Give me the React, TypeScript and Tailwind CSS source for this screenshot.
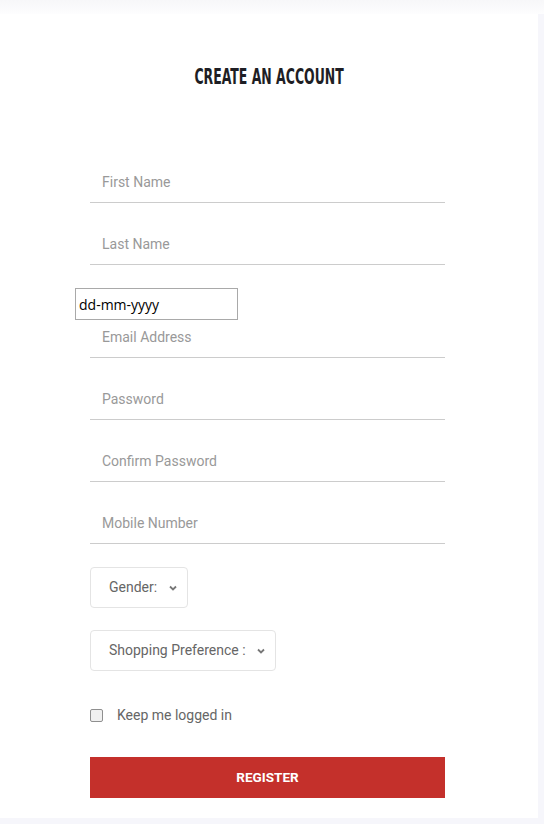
import React from 'react';

const Field: React.FC<{ label: string; className?: string }> = ({ label, className = 'mt-[22px]' }) => (
  <div className={`${className} h-10 border-b border-[#cccccc] flex items-center px-3`}>
    <span className="text-[14px] text-[#999999]">{label}</span>
  </div>
);

const Chevron: React.FC = () => (
  <svg width="8" height="6" viewBox="0 0 8 6" className="text-[#777777]">
    <path d="M1 1.5 L4 4.5 L7 1.5" fill="none" stroke="currentColor" strokeWidth="1.8" />
  </svg>
);

const SelectBox: React.FC<{ label: string; width: string; className: string }> = ({ label, width, className }) => (
  <div
    className={`${className} ${width} h-[41px] border border-[#e4e4e4] rounded-[4px] flex items-center justify-between pl-[18px] pr-[10px]`}
  >
    <span className="text-[14px] text-[#666666]">{label}</span>
    <Chevron />
  </div>
);

export default function App() {
  return (
    <div className="w-[544px] h-[824px] bg-[#f6f6fb] overflow-hidden" style={{ fontFamily: 'Roboto, sans-serif' }}>
      <div className="h-[14px] bg-gradient-to-b from-[#f7f7f9] to-[#fdfdfe]" />
      <div className="w-[538px] h-[804px] bg-white">
        <h1
          className="pt-[48px] text-center text-[21px] leading-[31px] font-bold text-[#1e1e24]"
          style={{ fontFamily: '"DejaVu Sans Condensed", "Liberation Sans Narrow", sans-serif' }}
        >
          <span className="inline-block scale-x-[0.66]">CREATE AN ACCOUNT</span>
        </h1>
        <div className="ml-[90px] w-[355px] pt-[70px]">
          <Field label="First Name" className="mt-0" />
          <Field label="Last Name" />
          <div
            className="mt-[23px] -ml-[15px] w-[163px] h-[32px] border border-[#a9a9a9] flex items-center pl-[3px] text-[14px] text-black"
            style={{ fontFamily: '"Open Sans", sans-serif' }}
          >
            dd-mm-yyyy
          </div>
          <Field label="Email Address" className="-mt-[2px]" />
          <Field label="Password" />
          <Field label="Confirm Password" />
          <Field label="Mobile Number" />
          <SelectBox label="Gender:" width="w-[98px]" className="mt-[23px]" />
          <SelectBox label="Shopping Preference :" width="w-[186px]" className="mt-[22px]" />
          <label className="mt-[34px] flex items-center">
            <span className="w-[13px] h-[13px] border border-[#8f8f8f] rounded-[2px] bg-[#f0f0f0]" />
            <span className="ml-[14px] text-[14px] text-[#666666]">Keep me logged in</span>
          </label>
          <button className="mt-[31px] w-full h-[41px] bg-[#c4302b] text-white text-[13.5px] font-bold flex items-center justify-center">
            REGISTER
          </button>
        </div>
      </div>
    </div>
  );
}
